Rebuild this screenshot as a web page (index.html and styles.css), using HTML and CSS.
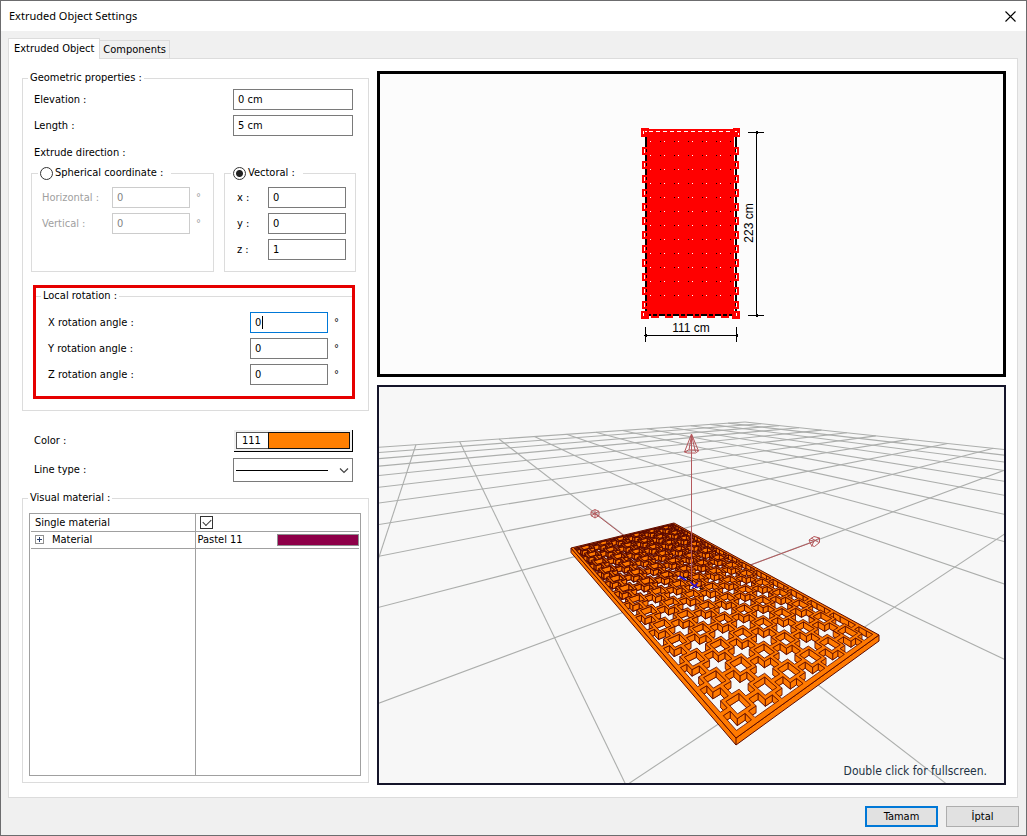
FILE: index.html
```html
<!DOCTYPE html>
<html lang="en">
<head>
<meta charset="utf-8">
<title>Extruded Object Settings</title>
<link rel="stylesheet" href="styles.css">
</head>
<body>
<div class="dialog">
  <header class="titlebar">
    <h1>Extruded Object Settings</h1>
    <button class="close" type="button" aria-label="Close"><svg width="11" height="11" viewBox="0 0 11 11"><path d="M.5 .5l10 10M10.5 .5l-10 10" stroke="#000" stroke-width="1.1"/></svg></button>
  </header>
  <div class="tabs" role="tablist">
    <button class="tab active" type="button" role="tab" aria-selected="true">Extruded Object</button>
    <button class="tab" type="button" role="tab" aria-selected="false">Components</button>
  </div>
  <main class="panel">
    <form class="settings">
      <fieldset class="group geometric">
        <legend>Geometric properties :</legend>
        <div class="row wide"><label for="elev">Elevation :</label><input id="elev" type="text" value="0 cm"></div>
        <div class="row wide"><label for="len">Length :</label><input id="len" type="text" value="5 cm"></div>
        <p class="caption">Extrude direction :</p>
        <div class="directions">
          <fieldset class="group spherical">
            <legend><input type="radio" name="dir" id="sph"><label for="sph">Spherical coordinate :</label></legend>
            <div class="row off"><label for="hor">Horizontal :</label><input id="hor" type="text" value="0" disabled><span class="deg">°</span></div>
            <div class="row off"><label for="ver">Vertical :</label><input id="ver" type="text" value="0" disabled><span class="deg">°</span></div>
          </fieldset>
          <fieldset class="group vectoral">
            <legend><input type="radio" name="dir" id="vec" checked><label for="vec">Vectoral :</label></legend>
            <div class="row"><label for="vx">x :</label><input id="vx" type="text" value="0"></div>
            <div class="row"><label for="vy">y :</label><input id="vy" type="text" value="0"></div>
            <div class="row"><label for="vz">z :</label><input id="vz" type="text" value="1"></div>
          </fieldset>
        </div>
        <div class="highlight">
          <fieldset class="group rotation">
            <legend>Local rotation :</legend>
            <div class="row"><label for="rx">X rotation angle :</label><span class="focus-field"><input class="focused" id="rx" type="text" value="0"><i class="caret"></i></span><span class="deg">°</span></div>
            <div class="row"><label for="ry">Y rotation angle :</label><input id="ry" type="text" value="0"><span class="deg">°</span></div>
            <div class="row"><label for="rz">Z rotation angle :</label><input id="rz" type="text" value="0"><span class="deg">°</span></div>
          </fieldset>
        </div>
      </fieldset>
      <div class="style-rows">
        <div class="row"><label for="color">Color :</label><button class="color" id="color" type="button"><span class="num">111</span><span class="chip"></span></button></div>
        <div class="row"><label for="line">Line type :</label><span class="line-field"><select id="line"><option value="solid" aria-label="Solid"></option></select><svg class="line-art" viewBox="0 0 120 24"><path d="M3 12.5H95" stroke="#000"/><path d="M107 10.5l4 4 4-4" fill="none" stroke="#444" stroke-width="1.2"/></svg></span></div>
      </div>
      <fieldset class="group material">
        <legend>Visual material :</legend>
        <div class="grid-box">
          <table>
            <tr><th scope="row"><label for="single">Single material</label></th><td><input type="checkbox" id="single" checked></td></tr>
            <tr><th scope="row"><span class="mat"><button class="expand" type="button" aria-label="Expand"><svg width="9" height="9" viewBox="0 0 9 9"><rect x=".5" y=".5" width="8" height="8" fill="#fff" stroke="#919191"/><path d="M2 4.5h5M4.5 2v5" stroke="#2a3f6d"/></svg></button>Material</span></th><td><span class="pastel">Pastel 11<i class="swatch"></i></span></td></tr>
            <tr class="rest"><th></th><td></td></tr>
          </table>
        </div>
      </fieldset>
    </form>
    <div class="views">
      <div class="view plan">
        <svg viewBox="380 74 623 300" shape-rendering="crispEdges">
          <defs>
            <pattern id="dots" x="648" y="127" width="14" height="14" patternUnits="userSpaceOnUse">
              <rect x="2" y="0" width="1" height="1" fill="#fff"/><rect x="12" y="0" width="1" height="1" fill="#000"/>
            </pattern>
            <pattern id="teeth" x="0" y="147" width="200" height="14" patternUnits="userSpaceOnUse">
              <rect width="200" height="8" fill="red"/>
            </pattern>
            <pattern id="feet" x="651" y="0" width="14" height="400" patternUnits="userSpaceOnUse">
              <rect width="8" height="400" fill="red"/>
            </pattern>
          </defs>
          <rect x="645" y="131" width="92" height="185" fill="#fff"/>
          <rect x="645" y="137" width="2" height="178" fill="#000"/>
          <rect x="735" y="137" width="2" height="178" fill="#000"/>
          <rect x="647" y="129" width="87" height="185" fill="red"/>
          <rect x="647" y="314" width="88" height="2" fill="#000"/>
          <rect x="649" y="141" width="84" height="168" fill="url(#dots)"/>
          <path d="M649 131.500H734" stroke="#fff" stroke-dasharray="4 3"/>
          <rect x="642" y="147" width="6" height="162" fill="url(#teeth)"/>
          <rect x="733" y="147" width="6" height="162" fill="url(#teeth)"/>
          <path d="M644.500 149v160M736.500 149v160" stroke="#fff" stroke-dasharray="4 10"/>
          <path d="M646 149v160M735.500 149v160" stroke="#000" stroke-dasharray="3 11"/>
          <rect x="651" y="313" width="78" height="5" fill="url(#feet)"/>
          <path d="M653 315h78" stroke="#000" stroke-width="2" stroke-dasharray="4 10"/>
          <path d="M641 128h8v9h-8zM733 128h7v9h-7zM641 311h8v8h-8zM732 311h8v8h-8z" fill="red"/>
          <path d="M643 131h1v3h-1zM645 131h2v1h-2zM735 131h2v1h-2zM738 133h1v2h-1zM643 313h1v3h-1zM736 313h1v3h-1z" fill="#fff"/>
          <path d="M748 132.500h16M748 315.500h16M756.500 132v184M645.500 327v15M736.500 327v15M645 335.500h92" stroke="#000" fill="none"/>
          <path d="M755 132l1-1h1l1 1v1l-1 1h-1l-1-1zM755 315l1-1h1l1 1v1l-1 1h-1l-1-1zM644 335l1-1h1l1 1v1l-1 1h-1l-1-1zM735 335l1-1h1l1 1v1l-1 1h-1l-1-1z"/>
          <text class="dim" x="691" y="332" text-anchor="middle">111 cm</text>
          <text class="dim" x="753" y="223" text-anchor="middle" transform="rotate(-90 753 223)">223 cm</text>
        </svg>
      </div>
      <div class="view scene">
        <svg viewBox="379 387 625 396" preserveAspectRatio="xMidYMid slice">
          <g id="ground" stroke="#acaeac" stroke-width="1.1"></g>
          <g stroke="#b4585c" fill="none">
            <path d="M595 513.500L691 587L814 541.500"/>
            <path d="M595 509.500l4 2v4l-4 2.500-4-2.500v-4zM591 512l8 4M599 511l-8 5M595 510v8"/>
            <path d="M809 540l5-3.500 5.500 1.500v4.500l-5 4-3-1zM809 540l5 1 5.500-3M814 541l-2.500 5.500M811 538l8 4.500"/>
          </g>
          <g id="lattice" stroke="#5c0a00" stroke-linejoin="round"></g>
          <g stroke="#b4585c" fill="none">
            <path d="M691.500 435v150"/>
            <path d="M691.500 434l-7 18 3 1h8l3-2zM684.500 452l4-2h8l2 1M689 450l2.500-15 4 17"/>
          </g>
          <path d="M679 576l7 4M690 582l8 6M692 588l6-5" stroke="#2b12d8" stroke-width="1.5"/>
          <path d="M683 576l10 6M699 588l4 1" stroke="#1b0500"/>
          <text class="hint" x="987" y="775" text-anchor="end">Double click for fullscreen.</text>
        </svg>
      </div>
    </div>
  </main>
  <footer class="actions">
    <button class="btn primary" type="button">Tamam</button>
    <button class="btn" type="button">İptal</button>
  </footer>
</div>
<script src="scene.js"></script>
</body>
</html>
```
FILE: styles.css
```css
* { box-sizing: border-box; }
body { margin: 0; font: 11px/14px "DejaVu Sans Condensed", Tahoma, "DejaVu Sans", sans-serif; color: #000; }
input, button, select { font: inherit; color: inherit; margin: 0; }
fieldset { margin: 0; padding: 0; min-width: 0; border: 0; }
p { margin: 0; }

.dialog { display: flex; flex-direction: column; height: 100vh; min-height: 780px; min-width: 720px; background: #f0f0f0; border: 1px solid #6c6c6e; }
.titlebar { display: flex; align-items: center; justify-content: space-between; height: 30px; flex: none; padding: 0 8px; background: #fff; }
.titlebar h1 { margin: 0; font: 11px/16px "Noto Sans", "Open Sans", sans-serif; }
.close { display: flex; padding: 2px; border: 0; background: none; }

.tabs { display: flex; align-items: flex-end; flex: none; height: 27px; padding: 7px 7px 0; }
.tab { height: 18px; padding: 0 3px; border: 1px solid #dcdcdc; border-bottom: 0; background: #f0f0f0; }
.tab.active { position: relative; height: 21px; padding: 0 5px 1px; margin-bottom: -1px; background: #fff; }
.tab + .tab { border-left: 0; }

.panel { display: flex; flex: 1; gap: 8px; min-height: 0; margin: 0 8px 0 7px; padding: 12px 11px 12px 13px; background: #fff; border: 1px solid #dcdcdc; }
.settings { display: flex; flex-direction: column; flex: none; width: 347px; padding-bottom: 2px; }
.views { display: grid; grid-template-rows: 306fr 400fr; flex: 1; gap: 8px; min-width: 0; }

.group { border: 1px solid #dcdcdc; }
.group > legend { display: flex; align-items: center; height: 14px; padding: 0 2px; }
.row { display: flex; align-items: center; height: 21px; }
.row label { flex: 1; }
input[type="text"] { width: 78px; height: 21px; padding: 0 4px; background: #fff; border: 1px solid #7a7a7a; border-radius: 0; outline: 0; }
input[type="text"]:disabled { color: #838383; border-color: #ccc; }
.deg { width: 8px; margin-left: 6px; }
.off { color: #a0a0a0; }

.geometric { padding: 4px 12px 11px 8px; }
.geometric > legend { margin-left: -3px; }
.geometric > .row { margin: 0 3px 5px; }
.wide input[type="text"] { width: 120px; }
.caption { margin: 10px 3px 6px; }
.directions { display: grid; grid-template-columns: 183fr 132fr; gap: 10px; }
.directions .group { height: 106px; }
.directions .row { margin-bottom: 5px; }
input[type="radio"] { appearance: none; width: 13px; height: 13px; margin-right: 2px; background: #fff; border: 1px solid #333; border-radius: 50%; }
input[type="radio"]:checked { background: radial-gradient(circle, #222 0 3px, #fff 4px); }
.spherical { padding: 7px 9px 0 10px; }
.spherical > legend { margin-left: -4px; padding-right: 8px; }
.vectoral { padding: 7px 9px 0 12px; }
.vectoral > legend { margin-left: -6px; padding-right: 8px; }

.highlight { margin: 13px 1px 0 2px; border: 3px solid #e60000; height: 114px; padding-top: 1px; }
.rotation { border-width: 1px 0 0; padding: 9px 12px 0 12px; }
.rotation > legend { margin-left: -7px; }
.rotation .row { margin-bottom: 5px; }
.rotation .deg { margin-right: -2px; }
.focus-field { position: relative; display: flex; }
.rotation input.focused { border-color: #0078d7; }
.caret { position: absolute; left: 12px; top: 4px; width: 1px; height: 13px; background: #000; }

.style-rows { display: flex; flex-direction: column; gap: 6px; padding: 18px 16px 10px 12px; }
.style-rows .row { height: 23px; }
.color { display: flex; width: 119px; height: 22px; padding: 2px; background: #f0f0f0; border: 0 solid #000; border-width: 0 1px 1px 0; }
.num { width: 32px; padding: 1px 0 0 5px; text-align: left; background: #fff; border: 1px solid #555; border-right: 0; height: 17px; }
.chip { flex: 1; height: 17px; background: #ff7f00; border: 1px solid #111; }
.line-field { position: relative; display: flex; width: 120px; height: 24px; }
.line-field select { appearance: none; width: 100%; height: 24px; background: #fff; border: 1px solid #7a7a7a; border-radius: 0; }
.line-art { position: absolute; left: 0; top: 0; width: 120px; height: 24px; pointer-events: none; }

.material { flex: 1; padding: 8px 7px 6px 6px; min-height: 0; }
.material > legend { margin-left: -1px; }
.grid-box { display: flex; padding: 0 1px; border: 1px solid #a0a0a0; height: 100%; }
table { width: 100%; height: 100%; border-collapse: collapse; table-layout: fixed; }
th, td { height: 17px; padding: 0; border-bottom: 1px solid #a0a0a0; font-weight: normal; text-align: left; vertical-align: middle; line-height: 13px; }
th { border-right: 1px solid #a0a0a0; padding-left: 4px; }
td { padding-left: 2px; }
.rest th, .rest td { height: auto; border-bottom: 0; }
input[type="checkbox"] { display: block; appearance: none; width: 13px; height: 13px; margin-left: 2px; border: 1px solid #333; background: #fff; position: relative; }
input[type="checkbox"]:checked::after { content: ""; position: absolute; left: 2px; top: 2px; width: 7px; height: 4px; border: solid #333; border-width: 0 0 1px 1px; transform: rotate(-45deg); }
.mat { display: flex; align-items: center; gap: 8px; }
.expand { display: flex; padding: 0; border: 0; background: none; }
.pastel { display: flex; align-items: center; justify-content: space-between; }
.swatch { width: 82px; height: 12px; background: #8e0049; border: 1px solid #909090; }

.view { display: flex; min-height: 0; overflow: hidden; }
.view svg { flex: 1; display: block; min-width: 0; width: 100%; height: 100%; }
.plan { background: #fcfcfc; border: 3px solid #000; }
.scene { background: #f7f7f7; border: 2px solid #15152a; }
.dim { font: 12px "Liberation Sans", Arial, sans-serif; }
.hint { font: 12px "DejaVu Sans Condensed", Tahoma, sans-serif; fill: #234; }

.actions { display: flex; justify-content: flex-end; flex: none; gap: 8px; height: 37px; padding: 8px 7px 0; }
.btn { width: 73px; height: 21px; padding: 0; background: #e1e1e1; border: 1px solid #adadad; }
.btn.primary { border: 2px solid #0078d7; }
```
FILE: scene.js
```js
(() => {
  const NS = "http://www.w3.org/2000/svg";
  const lattice = document.getElementById("lattice");
  const ground = document.getElementById("ground");

  function add(parent, tag, attrs) {
    const el = document.createElementNS(NS, tag);
    for (const key in attrs) el.setAttribute(key, attrs[key]);
    parent.appendChild(el);
    return el;
  }

  // Plane-to-view projection from four point pairs [[u, v], [x, y]].
  function projection(pairs) {
    const m = [];
    pairs.forEach(([[u, v], [x, y]]) => {
      m.push([u, v, 1, 0, 0, 0, -u * x, -v * x, x]);
      m.push([0, 0, 0, u, v, 1, -u * y, -v * y, y]);
    });
    for (let c = 0; c < 8; c++) {
      let best = c;
      for (let r = c + 1; r < 8; r++) if (Math.abs(m[r][c]) > Math.abs(m[best][c])) best = r;
      [m[c], m[best]] = [m[best], m[c]];
      for (let r = 0; r < 8; r++) {
        if (r === c) continue;
        const k = m[r][c] / m[c][c];
        for (let j = c; j < 9; j++) m[r][j] -= k * m[c][j];
      }
    }
    const h = m.map((row, i) => row[8] / row[i]);
    return (u, v) => {
      const w = h[6] * u + h[7] * v + 1;
      return [(h[0] * u + h[1] * v + h[2]) / w, (h[3] * u + h[4] * v + h[5]) / w, w];
    };
  }

  // Ground grid, ten cells out from the origin.
  const floor = projection([[[0, 0], [691, 587]], [[4, 0], [930, 498]], [[0, 10], [499, 439]], [[10, 10], [745, 422]]]);
  function gridLine(at) {
    let t = -10;
    while (at(t)[2] < 0.05) t += 0.1;
    const [x1, y1] = at(t), [x2, y2] = at(10);
    add(ground, "line", { x1, y1, x2, y2 });
  }
  for (let k = -2; k <= 10; k++) gridLine(t => floor(k, t));
  for (let k = -1; k <= 10; k++) gridLine(t => floor(t, k));

  // Perforated slab.
  const U = 6.43, V = 13.07, FRAME = 0.14, RING = 0.33, HOLE = 0.23, BAR = 0.06, START = 0.7;
  const face = projection([[[0, 0], [736, 738]], [[U, 0], [879, 635]], [[0, V], [571, 548]], [[U, V], [674, 523]]]);
  const ORANGE = "#ff7a00", SKY = "#f7f7f7";
  const depth = (u, v) => 7 - u / U - 2.5 * v / V;
  const up = ([u, v]) => face(u, v).slice(0, 2);
  const down = ([u, v]) => { const p = face(u, v); return [p[0], p[1] + depth(u, v)]; };
  const pts = list => list.map(p => p.map(n => n.toFixed(2)).join(",")).join(" ");

  const corners = [[0, V], [0, 0], [U, 0], [U, V]];
  add(lattice, "polygon", { points: pts([up(corners[0]), down(corners[0]), down(corners[1]), down(corners[2]), up(corners[2]), up(corners[1])]), fill: ORANGE });
  add(lattice, "polygon", { points: pts(corners.map(up)), fill: ORANGE });
  add(lattice, "polyline", { points: pts([up(corners[1]), down(corners[1])]) });

  const clamp = (n, max) => Math.min(max - FRAME, Math.max(FRAME, n));
  let count = 0;
  function hole(shape) {
    const poly = shape.map(([u, v]) => [clamp(u, U), clamp(v, V)]);
    const area = poly.reduce((s, c, j) => { const d = poly[(j + 1) % poly.length]; return s + c[0] * d[1] - d[0] * c[1]; }, 0);
    const id = "cut" + count++;
    // Edges crowd together with distance.
    const weight = (0.8 + 0.4 * poly[0][1] / V).toFixed(2);
    const clip = add(lattice, "clipPath", { id });
    add(clip, "polygon", { points: pts(poly.map(up)) });
    const g = add(lattice, "g", { "clip-path": "url(#" + id + ")", "stroke-width": weight });
    add(g, "polygon", { points: pts(poly.map(down)), fill: SKY });
    // Only the walls on the far side of the cut face the viewer.
    poly.forEach((p, i) => {
      const q = poly[(i + 1) % poly.length];
      const facing = (up(q)[0] - up(p)[0]) * Math.sign(area) < 0;
      if (facing) add(g, "polygon", { points: pts([up(p), up(q), down(q), down(p)]), fill: ORANGE });
    });
    add(lattice, "polygon", { points: pts(poly.map(up)), fill: "none", "stroke-width": weight });
  }

  const E = 0.5 - BAR, A = 0.5 - RING;
  const cross = [[-A, -E], [A, -E], [A, -A], [E, -A], [E, A], [A, A], [A, E], [-A, E], [-A, A], [-E, A], [-E, -A], [-A, -A]];
  const square = [[-HOLE, -HOLE], [HOLE, -HOLE], [HOLE, HOLE], [-HOLE, HOLE]];
  for (let j = 12; j >= -1; j--) {
    for (let i = 5; i >= -1; i--) {
      const u = START + i, v = START + j;
      hole(cross.map(([x, y]) => [u + 0.5 + x, v + 0.5 + y]));
      if (i >= 0 && j >= 0) hole(square.map(([x, y]) => [u + x, v + y]));
    }
  }
})();
```
